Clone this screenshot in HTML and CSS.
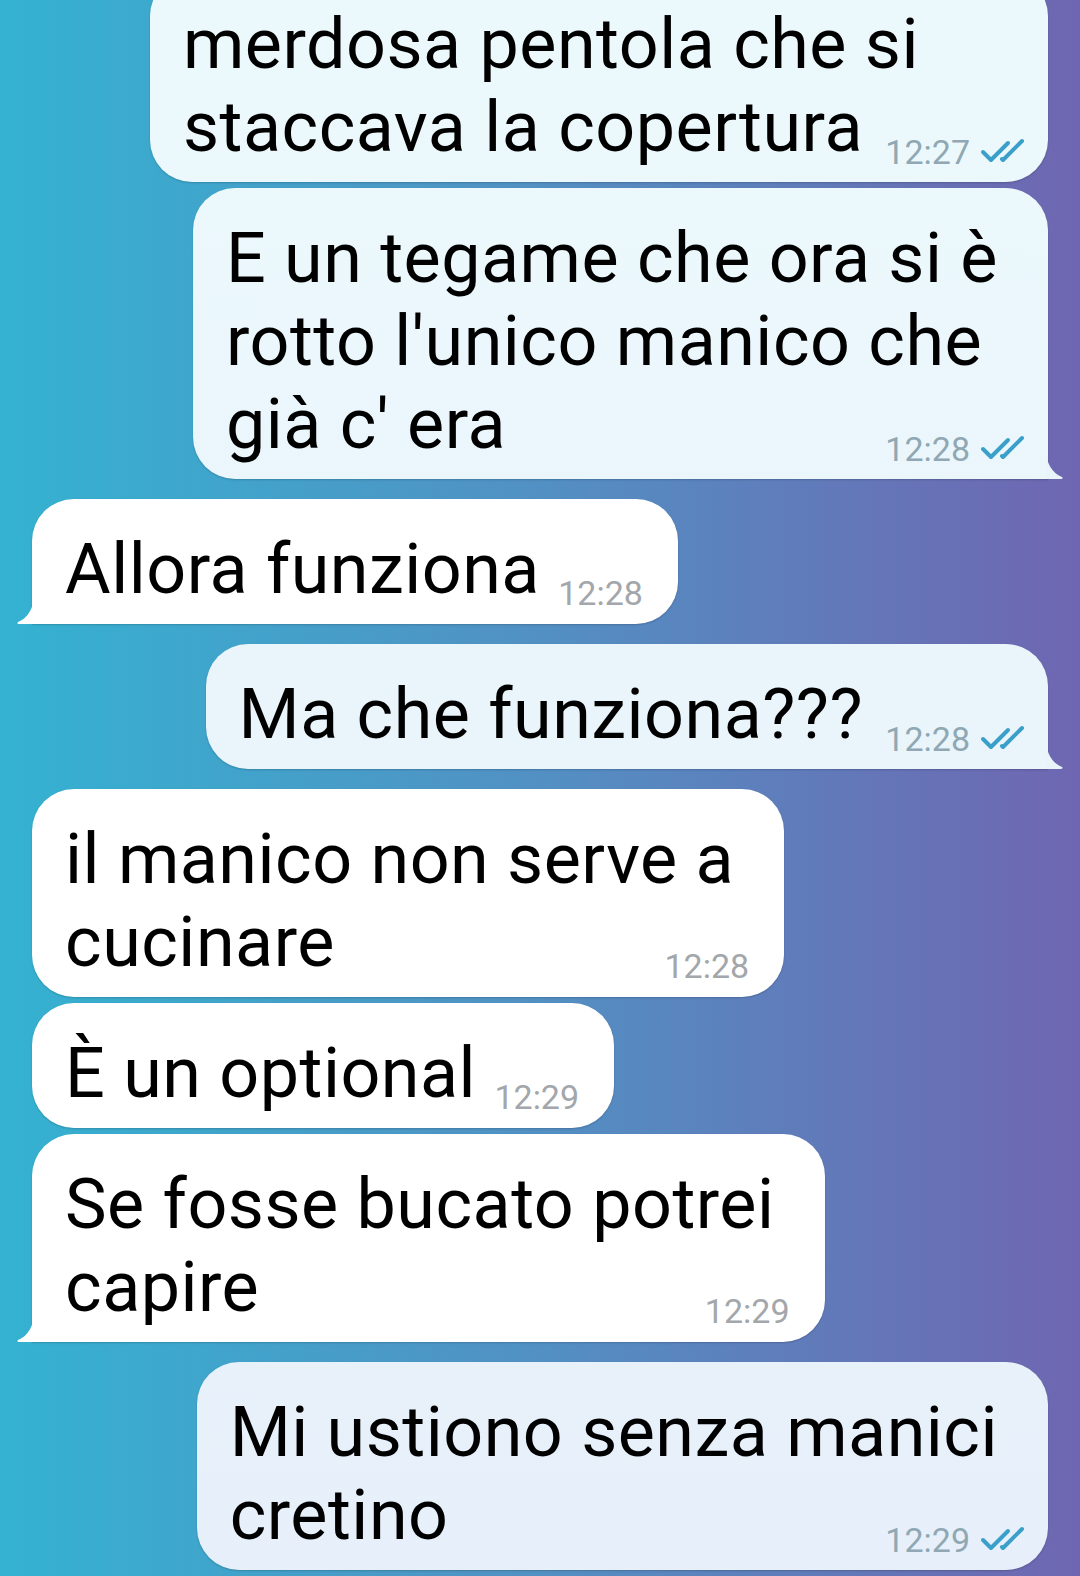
FILE: index.html
```html
<!DOCTYPE html>
<html lang="it">
<head>
    <meta charset="UTF-8">
    <meta name="viewport" content="width=device-width, initial-scale=1.0">
    <title>Chat</title>
    <link rel="stylesheet" href="styles.css">
</head>
<body>
    <div class="chat">
        <div class="msg out">
            <p class="text">merdosa pentola che si<br>staccava la copertura<span class="pad"></span></p>
            <span class="meta"><span class="time">12:27</span><svg class="ticks" viewBox="0 0 48 28"><path d="M3 14 L11 22 L28 5"/><path d="M22 21 L23 22 L42 3"/></svg></span>
        </div>
        <div class="msg out">
            <p class="text">E un tegame che ora si è<br>rotto l'unico manico che<br>già c' era<span class="pad"></span></p>
            <span class="meta"><span class="time">12:28</span><svg class="ticks" viewBox="0 0 48 28"><path d="M3 14 L11 22 L28 5"/><path d="M22 21 L23 22 L42 3"/></svg></span>
            <svg class="tail" viewBox="0 0 18 30"><path d="M0 0 C0 14 6 24 16 28 Q18 30 14 30 L0 30 Z"/></svg>
        </div>

        <div class="msg in group">
            <p class="text">Allora funziona<span class="pad"></span></p>
            <span class="meta"><span class="time">12:28</span></span>
            <svg class="tail" viewBox="0 0 18 30"><path d="M18 0 C18 14 12 24 2 28 Q0 30 4 30 L18 30 Z"/></svg>
        </div>

        <div class="msg out group">
            <p class="text">Ma che funziona???<span class="pad"></span></p>
            <span class="meta"><span class="time">12:28</span><svg class="ticks" viewBox="0 0 48 28"><path d="M3 14 L11 22 L28 5"/><path d="M22 21 L23 22 L42 3"/></svg></span>
            <svg class="tail" viewBox="0 0 18 30"><path d="M0 0 C0 14 6 24 16 28 Q18 30 14 30 L0 30 Z"/></svg>
        </div>

        <div class="msg in group">
            <p class="text">il manico non serve a<br>cucinare<span class="pad"></span></p>
            <span class="meta"><span class="time">12:28</span></span>
        </div>
        <div class="msg in">
            <p class="text">È un optional<span class="pad"></span></p>
            <span class="meta"><span class="time">12:29</span></span>
        </div>
        <div class="msg in">
            <p class="text">Se fosse bucato potrei<br>capire<span class="pad"></span></p>
            <span class="meta"><span class="time">12:29</span></span>
            <svg class="tail" viewBox="0 0 18 30"><path d="M18 0 C18 14 12 24 2 28 Q0 30 4 30 L18 30 Z"/></svg>
        </div>

        <div class="msg out group">
            <p class="text">Mi ustiono senza manici<br>cretino<span class="pad"></span></p>
            <span class="meta"><span class="time">12:29</span><svg class="ticks" viewBox="0 0 48 28"><path d="M3 14 L11 22 L28 5"/><path d="M22 21 L23 22 L42 3"/></svg></span>
        </div>
    </div>
</body>
</html>
```

FILE: styles.css
```css
* {
    margin: 0;
    padding: 0;
    box-sizing: border-box;
}

html, body {
    height: 100%;
}

body {
    font-family: Roboto, 'Noto Sans', sans-serif;
    background-image: linear-gradient(90deg, #34b2d1 0%, #5290c3 50%, #6f66b1 100%);
    overflow: hidden;
}

.chat {
    display: flex;
    flex-direction: column;
    padding: 0 32px;
    margin-top: -32px;
}

.msg {
    position: relative;
    width: fit-content;
    padding: 29px 50px 13px 33px;
    border-radius: 42px;
    margin-top: 6px;
    box-shadow: 0 1px 2px rgba(0, 0, 0, 0.18);
}

.msg.group {
    margin-top: 20px;
}

.msg.in {
    align-self: flex-start;
    background-color: #ffffff;
}

.msg.out {
    align-self: flex-end;
    background-image: linear-gradient(180deg, #ecf9fc 0%, #e7f0fa 100%);
    background-attachment: fixed;
    background-color: #eaf6fb;
}

.text {
    font-size: 70px;
    line-height: 83px;
    letter-spacing: 0.5px;
    color: #000;
    white-space: nowrap;
}

.pad {
    display: inline-block;
    width: 88px;
}

.out .pad {
    width: 135px;
}

.meta {
    position: absolute;
    bottom: 14px;
    right: 35px;
    display: flex;
    align-items: center;
    gap: 10px;
}

.out .meta {
    right: 20px;
    bottom: 13px;
}

.time {
    font-size: 34px;
    line-height: 34px;
    color: #a3a7ab;
}

.out .time {
    color: #8fa8b3;
}

.ticks {
    width: 48px;
    height: 28px;
    fill: none;
    stroke: #3a9fc9;
    stroke-width: 4;
    stroke-linecap: round;
    stroke-linejoin: round;
}

.msg.in:has(.tail) {
    border-bottom-left-radius: 0;
}

.msg.out:has(.tail) {
    border-bottom-right-radius: 0;
}

.tail {
    position: absolute;
    bottom: 0;
    width: 18px;
    height: 30px;
}

.in .tail {
    left: -16px;
    fill: #ffffff;
}

.out .tail {
    right: -16px;
    fill: #e9f3fa;
}
```
